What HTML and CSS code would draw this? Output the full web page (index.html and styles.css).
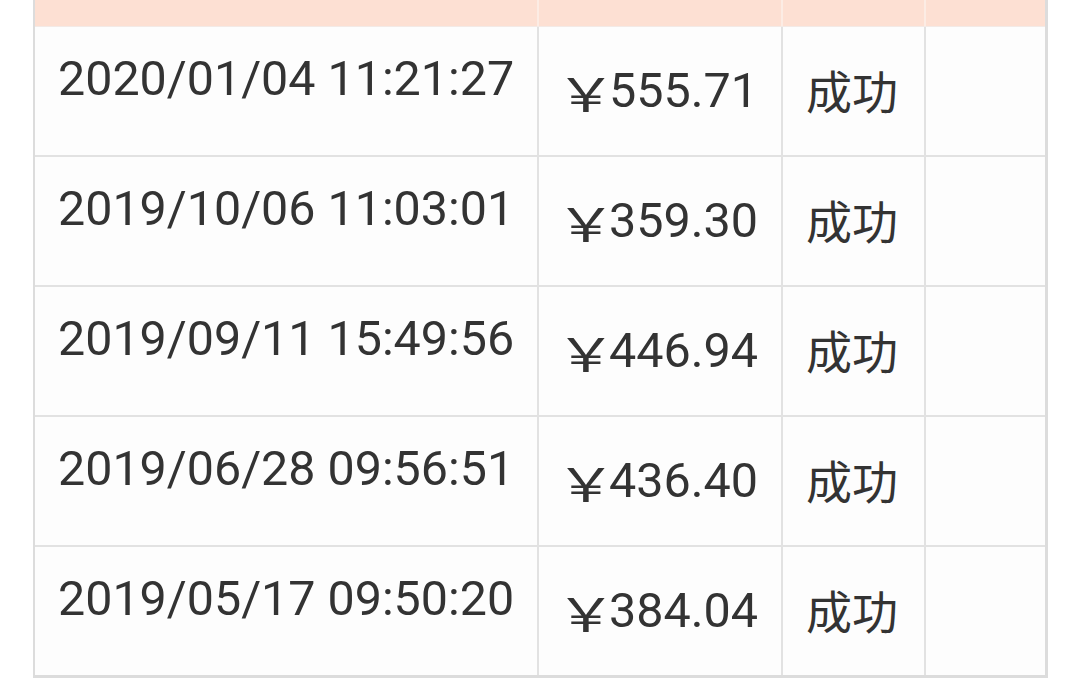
FILE: index.html
```html
<!DOCTYPE html>
<html lang="zh-CN">
<head>
<meta charset="utf-8">
<link rel="stylesheet" href="styles.css">
</head>
<body>
<div class="table">
  <div class="row head">
    <div class="cell c1"></div>
    <div class="cell c2"></div>
    <div class="cell c3"></div>
    <div class="cell c4"></div>
  </div>
  <div class="row">
    <div class="cell c1 date">2020/01/04 11:21:27</div>
    <div class="cell c2 amt"><span class="yen">￥</span>555.71</div>
    <div class="cell c3 st">成功</div>
    <div class="cell c4"></div>
  </div>
  <div class="row">
    <div class="cell c1 date">2019/10/06 11:03:01</div>
    <div class="cell c2 amt"><span class="yen">￥</span>359.30</div>
    <div class="cell c3 st">成功</div>
    <div class="cell c4"></div>
  </div>
  <div class="row">
    <div class="cell c1 date">2019/09/11 15:49:56</div>
    <div class="cell c2 amt"><span class="yen">￥</span>446.94</div>
    <div class="cell c3 st">成功</div>
    <div class="cell c4"></div>
  </div>
  <div class="row">
    <div class="cell c1 date">2019/06/28 09:56:51</div>
    <div class="cell c2 amt"><span class="yen">￥</span>436.40</div>
    <div class="cell c3 st">成功</div>
    <div class="cell c4"></div>
  </div>
  <div class="row last">
    <div class="cell c1 date">2019/05/17 09:50:20</div>
    <div class="cell c2 amt"><span class="yen">￥</span>384.04</div>
    <div class="cell c3 st">成功</div>
    <div class="cell c4"></div>
  </div>
</div>
</body>
</html>
```

FILE: styles.css
```css
html, body {
  margin: 0;
  padding: 0;
  background: #ffffff;
}
body {
  font-family: Roboto, "Noto Sans CJK SC", sans-serif;
  color: #333333;
}
.table {
  margin-left: 33px;
  width: 1015px;
  border-left: 2px solid #dcdcdc;
  border-right: 3px solid #dcdcdc;
  border-bottom: 3px solid #dcdcdc;
  box-sizing: border-box;
  background: #fdfdfd;
}
.row {
  display: grid;
  grid-template-columns: 504px 244px 143px 1fr;
  height: 130px;
  border-bottom: 2px solid #e2e2e2;
  box-sizing: border-box;
}
.row.last {
  border-bottom: none;
  height: 128px;
}
.row.head {
  height: 27px;
  background: #fde0d3;
  border-bottom: 1px solid #f3eae6;
}
.cell {
  border-right: 2px solid #e2e2e2;
  font-size: 48px;
  line-height: 58px;
}
.row.head .cell {
  border-right-color: #fcece4;
}
.cell.c4 {
  border-right: none;
}
.date {
  padding: 23px 0 0 23px;
  font-size: 48.4px;
}
.amt, .st {
  display: flex;
  align-items: center;
}
.amt {
  padding-left: 24px;
  font-size: 48.5px;
}
.yen {
  display: inline-block;
  font-family: "Noto Sans CJK SC", sans-serif;
  font-size: 46px;
  transform: scaleX(1.3);
  margin-right: 0;
}
.st {
  font-family: "Noto Sans CJK SC", sans-serif;
  font-size: 46px;
  padding-left: 23px;
  padding-bottom: 5px;
}
```
